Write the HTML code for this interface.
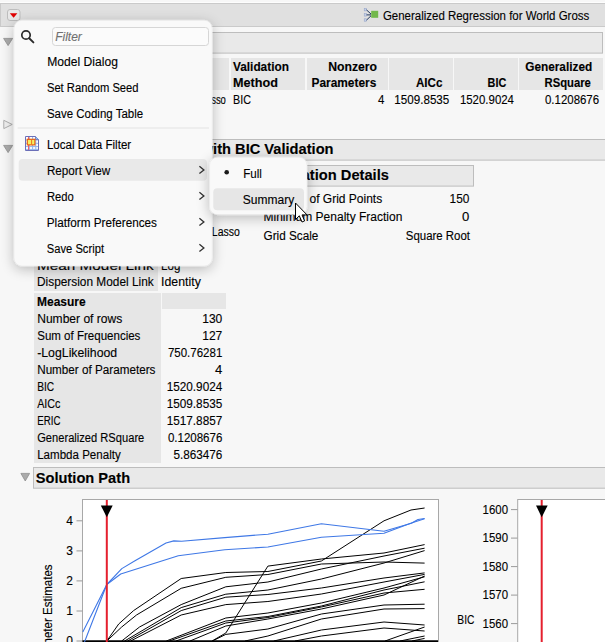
<!DOCTYPE html>
<html><head><meta charset="utf-8"><style>
html,body{margin:0;padding:0;background:#f7f7f7;overflow:hidden;}
svg{display:block;font-family:"Liberation Sans",sans-serif;}
text{stroke-width:0.12px;}
</style></head><body>
<svg width="605" height="642" viewBox="0 0 605 642">
<rect x="0" y="0" width="605" height="642" fill="#f7f7f7" />
<rect x="0" y="0" width="605" height="3" fill="#f7f7f7" />
<rect x="0" y="2" width="605" height="1" fill="#fdfdfd" />
<rect x="0" y="3" width="605" height="24" fill="#e0e0e0" />
<rect x="0" y="3" width="605" height="1" fill="#cacaca" />
<rect x="0" y="26" width="605" height="1" fill="#cacaca" />
<rect x="7.5" y="9.5" width="12.5" height="11" fill="#e8e8e8" stroke="#bdbdbd" rx="2.5" />
<path d="M9.8 13.2 L17.4 13.2 L13.6 17.8 Z" fill="#e00000"/>
<rect x="0" y="3" width="1" height="24" fill="#cacaca" />
<g><rect x="364.2" y="8.5" width="2.4" height="2.4" fill="#c6d0e6" stroke="#8fa0c8" stroke-width="0.5"/><rect x="364.2" y="13.7" width="2.4" height="2.4" fill="#c6d0e6" stroke="#8fa0c8" stroke-width="0.5"/><rect x="364.2" y="18.8" width="2.4" height="2.4" fill="#c6d0e6" stroke="#8fa0c8" stroke-width="0.5"/><path d="M366.6 10 L371 14 M366.6 14.9 L371 14.9 M366.6 20 L371 15.8" stroke="#23395e" stroke-width="1"/><rect x="371.2" y="10.8" width="7" height="7" fill="#72b84c"/></g>
<text x="382.90" y="19.80" font-size="12" fill="#000" stroke="#000" textLength="206.40" lengthAdjust="spacingAndGlyphs">Generalized Regression for World Gross</text>
<rect x="17.5" y="32.5" width="585" height="20.6" fill="#e9e9e9" stroke="#bdbdbd" />
<path d="M3.6 38.4 L12.6 38.4 L8.1 45.6 Z" fill="#ababab" stroke="#8e8e8e" stroke-width="0.8" stroke-linejoin="round"/>
<rect x="17" y="58" width="212" height="32" fill="#e6e6e6" />
<rect x="231" y="58" width="74" height="32" fill="#e6e6e6" />
<rect x="307" y="58" width="81" height="32" fill="#e6e6e6" />
<rect x="389" y="58" width="64" height="32" fill="#e6e6e6" />
<rect x="454" y="58" width="64" height="32" fill="#e6e6e6" />
<rect x="519" y="58" width="84" height="32" fill="#e6e6e6" />
<text x="233.00" y="71.00" font-size="12" fill="#000" stroke="#000" font-weight="bold" textLength="55.90" lengthAdjust="spacingAndGlyphs">Validation</text>
<text x="233.00" y="86.50" font-size="12" fill="#000" stroke="#000" font-weight="bold" textLength="44.90" lengthAdjust="spacingAndGlyphs">Method</text>
<text x="328.20" y="71.40" font-size="12" fill="#000" stroke="#000" font-weight="bold" textLength="48.90" lengthAdjust="spacingAndGlyphs">Nonzero</text>
<text x="311.50" y="86.70" font-size="12" fill="#000" stroke="#000" font-weight="bold" textLength="64.80" lengthAdjust="spacingAndGlyphs">Parameters</text>
<text x="416.00" y="86.70" font-size="12" fill="#000" stroke="#000" font-weight="bold" textLength="26.40" lengthAdjust="spacingAndGlyphs">AICc</text>
<text x="487.60" y="86.50" font-size="12" fill="#000" stroke="#000" font-weight="bold" textLength="18.70" lengthAdjust="spacingAndGlyphs">BIC</text>
<text x="525.20" y="70.90" font-size="12" fill="#000" stroke="#000" font-weight="bold" textLength="67.00" lengthAdjust="spacingAndGlyphs">Generalized</text>
<text x="544.50" y="86.50" font-size="12" fill="#000" stroke="#000" font-weight="bold" textLength="46.40" lengthAdjust="spacingAndGlyphs">RSquare</text>
<text x="161.10" y="104.00" font-size="12" fill="#000" stroke="#000" textLength="64.80" lengthAdjust="spacingAndGlyphs">Adaptive Lasso</text>
<text x="233.00" y="104.00" font-size="12" fill="#000" stroke="#000" textLength="17.90" lengthAdjust="spacingAndGlyphs">BIC</text>
<text x="378.10" y="104.00" font-size="12" fill="#000" stroke="#000" textLength="6.40" lengthAdjust="spacingAndGlyphs">4</text>
<text x="394.30" y="104.00" font-size="12" fill="#000" stroke="#000" textLength="55.00" lengthAdjust="spacingAndGlyphs">1509.8535</text>
<text x="459.90" y="104.00" font-size="12" fill="#000" stroke="#000" textLength="54.10" lengthAdjust="spacingAndGlyphs">1520.9024</text>
<text x="545.00" y="104.00" font-size="12" fill="#000" stroke="#000" textLength="54.10" lengthAdjust="spacingAndGlyphs">0.1208676</text>
<path d="M3.8 120.3 L3.8 128.6 L12.2 124.45 Z" fill="#f0f0f0" stroke="#a6a6a6" stroke-width="0.9" stroke-linejoin="round"/>
<path d="M3.6 145.4 L12.6 145.4 L8.1 152.6 Z" fill="#ababab" stroke="#8e8e8e" stroke-width="0.8" stroke-linejoin="round"/>
<rect x="17.5" y="139.5" width="600" height="20.6" fill="#e9e9e9" stroke="#bdbdbd" />
<text x="333.59" y="154.40" font-size="14.67" fill="#000" stroke="#000" font-weight="bold" font-style="normal" text-anchor="end">Adaptive Lasso with BIC Validation</text>
<rect x="258.5" y="165.5" width="215" height="20.6" fill="#e9e9e9" stroke="#bdbdbd" />
<text x="388.89" y="180.20" font-size="14.67" fill="#000" stroke="#000" font-weight="bold" font-style="normal" text-anchor="end">Estimation Details</text>
<text x="263.50" y="203.20" font-size="12" fill="#000" stroke="#000" textLength="118.70" lengthAdjust="spacingAndGlyphs">Number of Grid Points</text>
<text x="449.60" y="203.20" font-size="12" fill="#000" stroke="#000" textLength="19.80" lengthAdjust="spacingAndGlyphs">150</text>
<text x="263.50" y="221.00" font-size="12" fill="#000" stroke="#000" textLength="138.90" lengthAdjust="spacingAndGlyphs">Minimum Penalty Fraction</text>
<text x="462.10" y="221.00" font-size="12" fill="#000" stroke="#000" textLength="7.30" lengthAdjust="spacingAndGlyphs">0</text>
<text x="263.50" y="239.80" font-size="12" fill="#000" stroke="#000" textLength="54.90" lengthAdjust="spacingAndGlyphs">Grid Scale</text>
<text x="405.85" y="239.80" font-size="12" fill="#000" stroke="#000" textLength="64.15" lengthAdjust="spacingAndGlyphs">Square Root</text>
<rect x="34" y="196" width="124" height="95" fill="#e6e6e6" />
<text x="37.00" y="201.50" font-size="12" fill="#000" stroke="#000">Response</text>
<text x="161.10" y="201.50" font-size="12" fill="#000" stroke="#000">World Gross</text>
<text x="37.00" y="218.50" font-size="12" fill="#000" stroke="#000">Distribution</text>
<text x="161.10" y="218.50" font-size="12" fill="#000" stroke="#000">Normal</text>
<text x="37.00" y="235.40" font-size="12" fill="#000" stroke="#000">Estimation Method</text>
<text x="211.80" y="235.50" font-size="12" fill="#000" stroke="#000" textLength="28.00" lengthAdjust="spacingAndGlyphs">Lasso</text>
<text x="37.00" y="252.50" font-size="12" fill="#000" stroke="#000">Validation Method</text>
<text x="161.10" y="252.50" font-size="12" fill="#000" stroke="#000">BIC</text>
<text x="37.00" y="269.80" font-size="12" fill="#000" stroke="#000" textLength="116.70" lengthAdjust="spacingAndGlyphs">Mean Model Link</text>
<text x="161.10" y="269.80" font-size="12" fill="#000" stroke="#000" textLength="19.30" lengthAdjust="spacingAndGlyphs">Log</text>
<text x="37.00" y="286.40" font-size="12" fill="#000" stroke="#000" textLength="116.70" lengthAdjust="spacingAndGlyphs">Dispersion Model Link</text>
<text x="161.10" y="286.40" font-size="12" fill="#000" stroke="#000" textLength="39.70" lengthAdjust="spacingAndGlyphs">Identity</text>
<rect x="34" y="293" width="127" height="16" fill="#e6e6e6" />
<rect x="162" y="293" width="64" height="16" fill="#e6e6e6" />
<rect x="34" y="309" width="127" height="154" fill="#e6e6e6" />
<text x="37.00" y="305.50" font-size="12" fill="#000" stroke="#000" font-weight="bold">Measure</text>
<text x="37.20" y="322.70" font-size="12" fill="#000" stroke="#000" textLength="85.10" lengthAdjust="spacingAndGlyphs">Number of rows</text>
<text x="202.20" y="322.70" font-size="12" fill="#000" stroke="#000" textLength="20.10" lengthAdjust="spacingAndGlyphs">130</text>
<text x="37.20" y="339.70" font-size="12" fill="#000" stroke="#000" textLength="103.20" lengthAdjust="spacingAndGlyphs">Sum of Frequencies</text>
<text x="202.20" y="339.70" font-size="12" fill="#000" stroke="#000" textLength="20.10" lengthAdjust="spacingAndGlyphs">127</text>
<text x="37.20" y="356.70" font-size="12" fill="#000" stroke="#000" textLength="80.00" lengthAdjust="spacingAndGlyphs">-LogLikelihood</text>
<text x="167.90" y="356.70" font-size="12" fill="#000" stroke="#000" textLength="54.40" lengthAdjust="spacingAndGlyphs">750.76281</text>
<text x="37.20" y="373.70" font-size="12" fill="#000" stroke="#000" textLength="118.20" lengthAdjust="spacingAndGlyphs">Number of Parameters</text>
<text x="215.00" y="373.70" font-size="12" fill="#000" stroke="#000" textLength="7.30" lengthAdjust="spacingAndGlyphs">4</text>
<text x="37.20" y="390.70" font-size="12" fill="#000" stroke="#000" textLength="17.00" lengthAdjust="spacingAndGlyphs">BIC</text>
<text x="166.70" y="390.70" font-size="12" fill="#000" stroke="#000" textLength="55.60" lengthAdjust="spacingAndGlyphs">1520.9024</text>
<text x="37.20" y="407.70" font-size="12" fill="#000" stroke="#000" textLength="23.30" lengthAdjust="spacingAndGlyphs">AICc</text>
<text x="166.70" y="407.70" font-size="12" fill="#000" stroke="#000" textLength="55.60" lengthAdjust="spacingAndGlyphs">1509.8535</text>
<text x="37.20" y="424.70" font-size="12" fill="#000" stroke="#000" textLength="23.30" lengthAdjust="spacingAndGlyphs">ERIC</text>
<text x="166.70" y="424.70" font-size="12" fill="#000" stroke="#000" textLength="55.60" lengthAdjust="spacingAndGlyphs">1517.8857</text>
<text x="37.20" y="441.70" font-size="12" fill="#000" stroke="#000" textLength="107.10" lengthAdjust="spacingAndGlyphs">Generalized RSquare</text>
<text x="167.90" y="441.70" font-size="12" fill="#000" stroke="#000" textLength="54.40" lengthAdjust="spacingAndGlyphs">0.1208676</text>
<text x="37.20" y="458.70" font-size="12" fill="#000" stroke="#000" textLength="83.50" lengthAdjust="spacingAndGlyphs">Lambda Penalty</text>
<text x="173.40" y="458.70" font-size="12" fill="#000" stroke="#000" textLength="48.90" lengthAdjust="spacingAndGlyphs">5.863476</text>
<path d="M20.9 473.4 L29.6 473.4 L25.25 481 Z" fill="#ababab" stroke="#8e8e8e" stroke-width="0.8" stroke-linejoin="round"/>
<rect x="33.5" y="467.5" width="590" height="20.7" fill="#e9e9e9" stroke="#bdbdbd" />
<text x="35.72" y="482.80" font-size="14.5" fill="#000" stroke="#000" font-weight="bold" textLength="94.37" lengthAdjust="spacingAndGlyphs">Solution Path</text>
<rect x="82.5" y="499.5" width="356" height="200" fill="#ffffff" stroke="#a8a8a8" />
<line x1="76.5" y1="641.0" x2="82.5" y2="641.0" stroke="#9a9a9a" stroke-width="1"/>
<text x="66.20" y="645.20" font-size="12" fill="#000" stroke="#000">0</text>
<line x1="76.5" y1="611.0" x2="82.5" y2="611.0" stroke="#9a9a9a" stroke-width="1"/>
<text x="66.20" y="615.15" font-size="12" fill="#000" stroke="#000">1</text>
<line x1="76.5" y1="580.9" x2="82.5" y2="580.9" stroke="#9a9a9a" stroke-width="1"/>
<text x="66.20" y="585.10" font-size="12" fill="#000" stroke="#000">2</text>
<line x1="76.5" y1="550.9" x2="82.5" y2="550.9" stroke="#9a9a9a" stroke-width="1"/>
<text x="66.20" y="555.05" font-size="12" fill="#000" stroke="#000">3</text>
<line x1="76.5" y1="520.8" x2="82.5" y2="520.8" stroke="#9a9a9a" stroke-width="1"/>
<text x="66.20" y="525.00" font-size="12" fill="#000" stroke="#000">4</text>
<text transform="translate(52.4,672) rotate(-90)" font-size="12" fill="#000" stroke="#000" textLength="107.6" lengthAdjust="spacingAndGlyphs">Parameter Estimates</text>
<g fill="none" stroke-linejoin="round">
<line x1="82.5" y1="641.2" x2="438" y2="641.2" stroke="#000" stroke-width="1.8"/>
<polyline points="106.8,641.0 118.7,624.0 133.6,610.6 181.2,578.5 225.8,572.5 267.9,571.5 321.4,561.0 384.0,520.8 411.0,510.0 424.6,508.0" stroke="#000" stroke-width="1"/>
<polyline points="106.8,641.0 121.7,627.0 136.5,615.0 181.2,588.3 225.8,577.3 267.9,574.5 321.4,564.0 384.0,562.0 424.6,563.1" stroke="#000" stroke-width="1"/>
<polyline points="212.0,641.0 225.8,633.0 267.9,566.1 321.4,559.0 384.0,553.0 424.6,544.6" stroke="#000" stroke-width="1"/>
<polyline points="121.7,641.0 139.5,627.0 181.2,604.6 225.8,586.8 267.9,582.0 321.4,569.0 384.0,556.0 424.6,548.2" stroke="#000" stroke-width="1"/>
<polyline points="124.6,641.0 181.2,607.6 225.8,594.2 267.9,590.0 321.4,579.0 384.0,563.0 424.6,550.6" stroke="#000" stroke-width="1"/>
<polyline points="127.6,641.0 181.2,610.6 225.8,597.2 267.9,594.5 321.4,588.0 384.0,578.0 424.6,572.9" stroke="#000" stroke-width="1"/>
<polyline points="130.6,641.0 181.2,615.0 225.8,604.6 267.9,601.5 321.4,594.0 384.0,582.0 424.6,574.4" stroke="#000" stroke-width="1"/>
<polyline points="166.3,641.0 225.8,618.0 267.9,613.0 321.4,603.0 384.0,588.0 424.6,576.8" stroke="#000" stroke-width="1"/>
<polyline points="169.3,641.0 225.8,621.0 267.9,616.5 321.4,606.0 384.0,590.0 424.6,581.8" stroke="#000" stroke-width="1"/>
<polyline points="176.0,641.0 225.8,623.0 267.9,617.5 321.4,607.0 384.0,593.0 424.6,589.3" stroke="#000" stroke-width="1"/>
<polyline points="190.0,641.0 225.8,626.0 267.9,619.0 321.4,609.0 384.0,595.0 424.6,576.0" stroke="#000" stroke-width="1"/>
<polyline points="212.4,641.0 225.8,634.4 267.9,629.0 321.4,614.0 384.0,605.0 424.6,604.2" stroke="#000" stroke-width="1"/>
<polyline points="245.0,641.0 267.9,636.0 321.4,619.0 384.0,609.0 424.6,608.6" stroke="#000" stroke-width="1"/>
<polyline points="273.8,641.0 321.4,630.0 384.0,622.0 424.6,625.0" stroke="#000" stroke-width="1"/>
<polyline points="295.0,641.0 321.4,636.0 384.0,628.0 424.6,631.0" stroke="#000" stroke-width="1"/>
<polyline points="385.0,641.0 424.6,627.0" stroke="#000" stroke-width="1"/>
<polyline points="400.0,641.0 424.6,636.0" stroke="#000" stroke-width="1"/>
<polyline points="412.0,641.0 424.6,638.4" stroke="#000" stroke-width="1"/>
<polyline points="82.8,632.0 106.8,584.5 121.8,568.6 135.0,560.8 166.0,543.0 173.8,540.9 181.6,541.3 224.7,537.6 267.9,534.2 321.4,523.8 384.0,531.2 411.4,523.2 418.0,519.5 424.6,518.5" stroke="#3f78e6" stroke-width="1.1"/>
<polyline points="84.5,642.0 106.8,584.5 120.7,574.0 178.3,555.8 224.7,549.8 267.9,547.0 321.4,537.2 384.0,533.3 411.4,523.0 424.6,518.8" stroke="#3f78e6" stroke-width="1.1"/>
</g>
<rect x="105.8" y="500" width="2" height="142" fill="#e5202e" />
<path d="M100.8 505.4 L112.7 505.4 L106.8 517.3 Z" fill="#000"/>
<rect x="517.7" y="499.5" width="200" height="200" fill="#ffffff" stroke="#a8a8a8" />
<line x1="511" y1="509.6" x2="517.5" y2="509.6" stroke="#9a9a9a" stroke-width="1"/>
<text x="482.60" y="513.80" font-size="12" fill="#000" stroke="#000" textLength="25.40" lengthAdjust="spacingAndGlyphs">1600</text>
<line x1="511" y1="538.1" x2="517.5" y2="538.1" stroke="#9a9a9a" stroke-width="1"/>
<text x="482.60" y="542.30" font-size="12" fill="#000" stroke="#000" textLength="25.40" lengthAdjust="spacingAndGlyphs">1590</text>
<line x1="511" y1="566.6" x2="517.5" y2="566.6" stroke="#9a9a9a" stroke-width="1"/>
<text x="482.60" y="570.80" font-size="12" fill="#000" stroke="#000" textLength="25.40" lengthAdjust="spacingAndGlyphs">1580</text>
<line x1="511" y1="595.1" x2="517.5" y2="595.1" stroke="#9a9a9a" stroke-width="1"/>
<text x="482.60" y="599.30" font-size="12" fill="#000" stroke="#000" textLength="25.40" lengthAdjust="spacingAndGlyphs">1570</text>
<line x1="511" y1="623.6" x2="517.5" y2="623.6" stroke="#9a9a9a" stroke-width="1"/>
<text x="482.60" y="627.80" font-size="12" fill="#000" stroke="#000" textLength="25.40" lengthAdjust="spacingAndGlyphs">1560</text>
<text x="457.30" y="623.70" font-size="12" fill="#000" stroke="#000" textLength="17.10" lengthAdjust="spacingAndGlyphs">BIC</text>
<rect x="540.7" y="500" width="2" height="142" fill="#e5202e" />
<path d="M536 505.4 L547.7 505.4 L541.7 517.3 Z" fill="#000"/>
<defs><filter id="sh" x="-30%" y="-30%" width="160%" height="160%"><feGaussianBlur in="SourceAlpha" stdDeviation="6.5"/><feOffset dx="0" dy="3"/><feComponentTransfer><feFuncA type="linear" slope="0.26"/></feComponentTransfer><feMerge><feMergeNode/><feMergeNode in="SourceGraphic"/></feMerge></filter></defs>
<rect x="14" y="20.3" width="198.2" height="245.7" rx="8" fill="#f9f9f9" stroke="#e6e6e6" stroke-width="0.5" filter="url(#sh)"/>
<circle cx="26.0" cy="35.0" r="4.2" fill="none" stroke="#2a2a2a" stroke-width="1.7"/><path d="M29.2 38.3 L33.4 42.4" stroke="#2a2a2a" stroke-width="1.9" stroke-linecap="round"/>
<rect x="52.5" y="27.5" width="156" height="18" rx="3" fill="#fbfbfb" stroke="#d6d6d6"/>
<text x="55.20" y="40.80" font-size="12" fill="#707070" stroke="#707070" font-style="italic">Filter</text>
<text x="47.30" y="66.20" font-size="12" fill="#000" stroke="#000" textLength="70.60" lengthAdjust="spacingAndGlyphs">Model Dialog</text>
<text x="46.90" y="91.90" font-size="12" fill="#000" stroke="#000" textLength="91.70" lengthAdjust="spacingAndGlyphs">Set Random Seed</text>
<text x="46.90" y="117.70" font-size="12" fill="#000" stroke="#000" textLength="96.30" lengthAdjust="spacingAndGlyphs">Save Coding Table</text>
<rect x="17.6" y="127.5" width="191.4" height="1" fill="#e4e4e4" />
<g><path d="M25.5 136.5 H35.5 L38.5 139.5 V150.5 H25.5 Z" fill="#ffffff" stroke="#6b6fb8" stroke-width="1"/><path d="M26 140 H38 M26 143.3 H38 M26 146.6 H38 M26 149.4 H38 M29.3 137 V150 M32.6 137 V150 M35.8 139 V150" stroke="#8fb4ec" stroke-width="1"/><path d="M35.5 136.5 V139.5 H38.5" fill="#8cc0f0" stroke="#6b6fb8" stroke-width="0.8"/><path d="M28.6 137 V150" stroke="#f05060" stroke-width="1"/><rect x="27.3" y="139.3" width="7.6" height="5.6" fill="#f4f060" stroke="#e86010" stroke-width="1.2"/><path d="M31.6 139.8 V144.5" stroke="#f07020" stroke-width="1"/></g>
<text x="46.90" y="149.10" font-size="12" fill="#000" stroke="#000" textLength="84.30" lengthAdjust="spacingAndGlyphs">Local Data Filter</text>
<rect x="18.7" y="159" width="188.3" height="21.8" rx="4" fill="#e9e9e9"/>
<text x="46.90" y="175.10" font-size="12" fill="#000" stroke="#000" textLength="63.30" lengthAdjust="spacingAndGlyphs">Report View</text>
<text x="46.90" y="200.70" font-size="12" fill="#000" stroke="#000" textLength="26.80" lengthAdjust="spacingAndGlyphs">Redo</text>
<text x="46.80" y="226.50" font-size="12" fill="#000" stroke="#000" textLength="110.20" lengthAdjust="spacingAndGlyphs">Platform Preferences</text>
<text x="46.80" y="252.90" font-size="12" fill="#000" stroke="#000" textLength="57.20" lengthAdjust="spacingAndGlyphs">Save Script</text>
<path d="M199.4 166.2 L203.9 169.9 L199.4 173.6" fill="none" stroke="#333" stroke-width="1.3"/>
<path d="M199.4 192.2 L203.9 195.9 L199.4 199.6" fill="none" stroke="#333" stroke-width="1.3"/>
<path d="M199.4 218.2 L203.9 221.9 L199.4 225.6" fill="none" stroke="#333" stroke-width="1.3"/>
<path d="M199.4 244.2 L203.9 247.9 L199.4 251.6" fill="none" stroke="#333" stroke-width="1.3"/>
<rect x="209.6" y="157.2" width="97.4" height="57.4" rx="8" fill="#f9f9f9" stroke="#e6e6e6" stroke-width="0.5" filter="url(#sh)"/>
<circle cx="226.7" cy="172.2" r="2.3" fill="#1b1b1b"/>
<text x="243.20" y="177.80" font-size="12" fill="#000" stroke="#000" textLength="18.70" lengthAdjust="spacingAndGlyphs">Full</text>
<rect x="213.25" y="188.2" width="90.75" height="22" rx="4" fill="#e6e6e6"/>
<text x="242.80" y="204.00" font-size="12" fill="#000" stroke="#000" textLength="51.50" lengthAdjust="spacingAndGlyphs">Summary</text>
<path d="M295.5 203 L295.5 219.5 L299.3 215.8 L302 222 L304.6 220.9 L302 214.9 L307 214.9 Z" fill="#fff" stroke="#000" stroke-width="1" stroke-linejoin="miter"/>
</svg></body></html>
